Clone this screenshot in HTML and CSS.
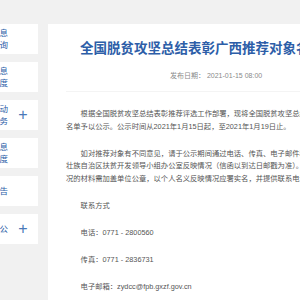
FILE: index.html
```html
<!DOCTYPE html>
<html lang="zh-CN">
<head>
    <meta charset="UTF-8">
    <meta name="viewport" content="width=device-width, initial-scale=1.0">
    <title>全国脱贫攻坚总结表彰广西推荐对象名单公示</title>
    <link rel="stylesheet" href="styles.css">
</head>
<body>
    <div class="page">
        <aside class="side">
            <div class="side-item"><span class="side-text">政府信息<br>公开查询</span></div>
            <div class="side-item"><span class="side-text">政府信息<br>公开制度</span></div>
            <div class="side-item"><span class="side-text">政民互动<br>政务服务</span><span class="plus">+</span></div>
            <div class="side-item"><span class="side-text">政府信息<br>公开年度</span></div>
            <div class="side-item"><span class="side-text">通知公告</span></div>
            <div class="side-item"><span class="side-text">政务公</span><span class="plus">+</span></div>
        </aside>

        <main class="article">
            <h1 class="title">全国脱贫攻坚总结表彰广西推荐对象名单公示</h1>
            <div class="meta">发布日期：&nbsp;2021-01-15 08:00</div>
            <div class="divider"></div>

            <div class="content">
                <p class="indent">根据全国脱贫攻坚总结表彰推荐评选工作部署，现将全国脱贫攻坚总结表彰广西推荐对象<br>名单予以公示。公示时间从2021年1月15日起，至2021年1月19日止。</p>
                <p class="indent">如对推荐对象有不同意见，请于公示期间通过电话、传真、电子邮件和信函等方式向广西<br>壮族自治区扶贫开发领导小组办公室反映情况（信函以到达日邮戳为准）。以单位名义反映情<br>况的材料需加盖单位公章，以个人名义反映情况应署实名，并提供联系电话。</p>
                <p class="indent">联系方式</p>
                <p class="indent">电话：0771 - 2800560</p>
                <p class="indent">传真：0771 - 2836731</p>
                <p class="indent">电子邮箱：zydcc@fpb.gxzf.gov.cn</p>
            </div>
        </main>
    </div>
</body>
</html>
```

FILE: styles.css
```css
:root {
    --page-bg: #f1f1f1;
    --card-bg: #ffffff;
    --blue: #2d5ea8;
    --plus-blue: #4a78b8;
    --text: #555555;
    --muted: #8a8a8a;
}
body {
    margin: 0;
    background-color: var(--page-bg);
    font-family: "Liberation Sans", "Noto Sans CJK SC", sans-serif;
    overflow: hidden;
}
.page {
    display: flex;
    align-items: flex-start;
    gap: 10px;
    padding-top: 24px;
}
.side {
    flex-shrink: 0;
    width: 100px;
    margin-left: -62px;
    display: flex;
    flex-direction: column;
    gap: 8px;
}
.side-item {
    background-color: var(--card-bg);
    height: 30px;
    display: grid;
    grid-template-columns: 70px 1fr;
    align-items: center;
}
.side-text {
    text-align: right;
    color: var(--blue);
    font-size: 8.5px;
    line-height: 12px;
}
.plus {
    color: var(--plus-blue);
    font-size: 16px;
    font-weight: 300;
    text-align: center;
    line-height: 1;
}
.article {
    flex-shrink: 0;
    width: 640px;
    min-height: 400px;
    background-color: var(--card-bg);
    padding: 13px 18px;
}
.title {
    margin: 0;
    padding-left: 14px;
    font-family: "Noto Sans CJK SC", sans-serif;
    font-size: 13.5px;
    line-height: 20px;
    font-weight: 700;
    color: var(--blue);
    white-space: nowrap;
}
.meta {
    margin-top: 14px;
    margin-left: 104px;
    font-size: 7px;
    line-height: 10px;
    color: var(--muted);
}
.divider {
    margin-top: 10px;
    border-top: 1px solid #f4f4f4;
}
.content {
    padding-top: 16px;
    font-size: 7.3px;
    line-height: 12.5px;
    color: var(--text);
}
.content p {
    margin: 0 0 14.5px;
    white-space: nowrap;
}
.indent {
    text-indent: 2em;
}
```
